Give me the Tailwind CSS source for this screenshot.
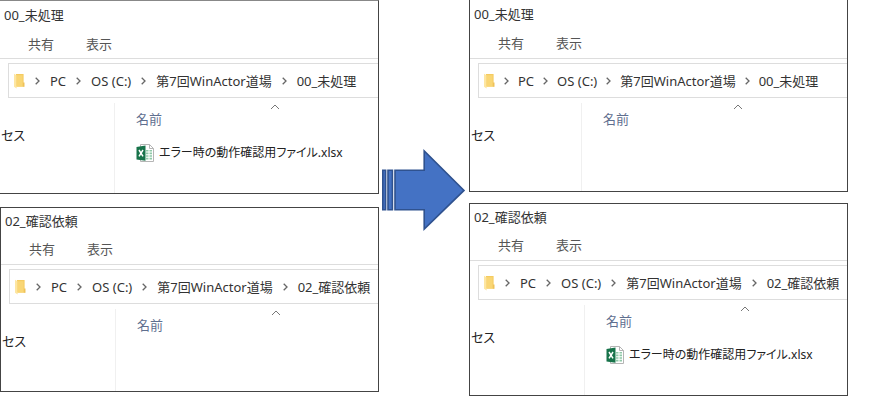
<!DOCTYPE html>
<html lang="ja">
<head>
  <meta charset="UTF-8">
  <title>第7回WinActor道場 - ファイルの移動</title>
  <meta name="viewport" content="width=device-width, initial-scale=1.0">
  <script src="https://cdn.jsdelivr.net/npm/@tailwindcss/browser@4"></script>
</head>
<body class="bg-white font-['Noto_Sans','Noto_Sans_CJK_JP',sans-serif] text-[13px] leading-[18px] text-[#333]">

  <!-- icons -->
  <svg class="hidden" aria-hidden="true">
    <symbol id="folder" viewBox="0 0 12 16">
      <path d="M3 1h7.6v12.6H3z" fill="#f5cb60"/>
      <path d="M9.6 9.5h1.9v4.3H9.6z" fill="#eec25a"/>
      <path d="M1 .8l2.6 1.4v13.2L1 13.8z" fill="#fde6a2"/>
      <path d="M3.6 2.2h6v11.4h-6z" fill="#f9d675"/>
    </symbol>
    <symbol id="chevron" viewBox="0 0 5 8">
      <path d="M.7.8L4 4 .7 7.2" fill="none" stroke="#666" stroke-width="1.3"/>
    </symbol>
    <symbol id="caret" viewBox="0 0 10 6">
      <path d="M1 5l4-4 4 4" fill="none" stroke="#777" stroke-width="1"/>
    </symbol>
    <symbol id="excel" viewBox="0 0 19 18">
      <path d="M4.5.5h9l4 4v13h-13z" fill="#fff" stroke="#b5b5b5"/>
      <path d="M13.5.5v4h4" fill="none" stroke="#b5b5b5"/>
      <path d="M10 6h2.5v1.6H10zM13.5 6H16v1.6h-2.5zM10 8.6h2.5v1.6H10zM13.5 8.6H16v1.6h-2.5zM10 11.2h2.5v1.6H10zM13.5 11.2H16v1.6h-2.5zM10 13.8h2.5v1.6H10zM13.5 13.8H16v1.6h-2.5z" fill="#8fc9a8"/>
      <path d="M.5 3l9-1.6v15.4L.5 15.4z" fill="#17734a"/>
      <path d="M3 6l4 6.4M7 6l-4 6.4" stroke="#fff" stroke-width="1.5"/>
    </symbol>
  </svg>

  <main class="grid grid-cols-[minmax(0,1fr)_90px_minmax(0,1fr)] pr-8">

    <!-- before -->
    <div class="flex flex-col gap-[13px]">
      <section class="flex min-h-[194px] flex-col overflow-hidden whitespace-nowrap border border-l-0 border-[#444] border-t-[#888]">
        <h2 class="flex h-7 items-center pl-1">00_未処理</h2>
        <div class="flex h-[30px] items-center gap-8 border-b border-[#ddd] pl-7 text-[#555]">
          <button type="button">共有</button>
          <button type="button">表示</button>
        </div>
        <nav class="mt-1 ml-2 flex h-[35px] items-center gap-[10px] border border-r-0 border-[#ddd] pl-1">
          <svg class="h-4 w-3 shrink-0"><use href="#folder"/></svg>
          <svg class="h-2 w-[5px] shrink-0"><use href="#chevron"/></svg>
          <a href="#">PC</a>
          <svg class="h-2 w-[5px] shrink-0"><use href="#chevron"/></svg>
          <a href="#">OS (C:)</a>
          <svg class="h-2 w-[5px] shrink-0"><use href="#chevron"/></svg>
          <a href="#">第7回WinActor道場</a>
          <svg class="h-2 w-[5px] shrink-0"><use href="#chevron"/></svg>
          <a href="#">00_未処理</a>
        </nav>
        <div class="mt-[5px] flex flex-1">
          <div class="w-[115px] border-r border-[#f0f0f0] pt-[23px] pl-px text-[#222]"><span class="[font-feature-settings:'palt']">セス</span></div>
          <table class="ml-[21px] self-start text-left">
            <thead>
              <tr>
                <th class="p-0 font-normal text-[#5f6f8f]">
                  <svg class="mt-px ml-[134px] h-[6px] w-[10px]"><use href="#caret"/></svg>
                  <button type="button" class="block">名前</button>
                </th>
              </tr>
            </thead>
            <tbody>
              <tr>
                <td class="p-0 pt-4">
                  <div class="flex items-center gap-1 text-[12px] text-[#222]">
                    <svg class="h-[18px] w-[19px]"><use href="#excel"/></svg>
                    <span class="[font-feature-settings:'palt']">エラー時の動作確認用ファイル.xlsx</span>
                  </div>
                </td>
              </tr>
            </tbody>
          </table>
        </div>
      </section>

      <section class="flex min-h-[185px] flex-col overflow-hidden whitespace-nowrap border border-[#444]">
        <h2 class="flex h-[26px] items-center pl-1">02_確認依頼</h2>
        <div class="flex h-[31px] items-center gap-8 border-b border-[#ddd] pl-7 text-[#555]">
          <button type="button">共有</button>
          <button type="button">表示</button>
        </div>
        <nav class="mt-1 ml-2 flex h-[35px] items-center gap-[10px] border border-r-0 border-[#ddd] pl-1">
          <svg class="h-4 w-3 shrink-0"><use href="#folder"/></svg>
          <svg class="h-2 w-[5px] shrink-0"><use href="#chevron"/></svg>
          <a href="#">PC</a>
          <svg class="h-2 w-[5px] shrink-0"><use href="#chevron"/></svg>
          <a href="#">OS (C:)</a>
          <svg class="h-2 w-[5px] shrink-0"><use href="#chevron"/></svg>
          <a href="#">第7回WinActor道場</a>
          <svg class="h-2 w-[5px] shrink-0"><use href="#chevron"/></svg>
          <a href="#">02_確認依頼</a>
        </nav>
        <div class="mt-[5px] flex flex-1">
          <div class="w-[115px] border-r border-[#f0f0f0] pt-[23px] pl-px text-[#222]"><span class="[font-feature-settings:'palt']">セス</span></div>
          <table class="ml-[21px] self-start text-left">
            <thead>
              <tr>
                <th class="p-0 font-normal text-[#5f6f8f]">
                  <svg class="mt-px ml-[134px] h-[6px] w-[10px]"><use href="#caret"/></svg>
                  <button type="button" class="block">名前</button>
                </th>
              </tr>
            </thead>
          </table>
        </div>
      </section>
    </div>

    <!-- striped arrow -->
    <svg class="mt-[148px] ml-[3px] h-[84px] w-[84px]" viewBox="0 0 84 84" role="img" aria-label="移動">
      <g fill="#4472c4" stroke="#2f528f" stroke-width="1.6">
        <path d="M.8 22.2h2.8v39.6H.8z"/>
        <path d="M6 22.2h4.4v39.6H6z"/>
        <path d="M13 22.2h29.2V3L82 42.4 42.2 81V61.8H13z"/>
      </g>
    </svg>

    <!-- after -->
    <div class="flex flex-col gap-[11px]">
      <section class="flex min-h-[192px] flex-col overflow-hidden whitespace-nowrap border border-t-0 border-[#444]">
        <h2 class="flex h-7 items-center pl-1">00_未処理</h2>
        <div class="flex h-[31px] items-center gap-8 border-b border-[#ddd] pl-7 text-[#555]">
          <button type="button">共有</button>
          <button type="button">表示</button>
        </div>
        <nav class="mt-1 ml-2 flex h-[35px] items-center gap-[9px] border border-r-0 border-[#ddd] pl-1">
          <svg class="h-4 w-3 shrink-0"><use href="#folder"/></svg>
          <svg class="h-2 w-[5px] shrink-0"><use href="#chevron"/></svg>
          <a href="#">PC</a>
          <svg class="h-2 w-[5px] shrink-0"><use href="#chevron"/></svg>
          <a href="#">OS (C:)</a>
          <svg class="h-2 w-[5px] shrink-0"><use href="#chevron"/></svg>
          <a href="#">第7回WinActor道場</a>
          <svg class="h-2 w-[5px] shrink-0"><use href="#chevron"/></svg>
          <a href="#">00_未処理</a>
        </nav>
        <div class="mt-[5px] flex flex-1">
          <div class="w-[112px] border-r border-[#f0f0f0] pt-[23px] pl-px text-[#222]"><span class="[font-feature-settings:'palt']">セス</span></div>
          <table class="ml-[21px] self-start text-left">
            <thead>
              <tr>
                <th class="p-0 font-normal text-[#5f6f8f]">
                  <svg class="mt-px ml-[130px] h-[6px] w-[10px]"><use href="#caret"/></svg>
                  <button type="button" class="block">名前</button>
                </th>
              </tr>
            </thead>
          </table>
        </div>
      </section>

      <section class="flex min-h-[193px] flex-col overflow-hidden whitespace-nowrap border border-[#444]">
        <h2 class="flex h-[26px] items-center pl-1">02_確認依頼</h2>
        <div class="flex h-[31px] items-center gap-8 border-b border-[#ddd] pl-7 text-[#555]">
          <button type="button">共有</button>
          <button type="button">表示</button>
        </div>
        <nav class="mt-1 ml-2 flex h-[35px] items-center gap-[10px] border border-r-0 border-[#ddd] pl-1">
          <svg class="h-4 w-3 shrink-0"><use href="#folder"/></svg>
          <svg class="h-2 w-[5px] shrink-0"><use href="#chevron"/></svg>
          <a href="#">PC</a>
          <svg class="h-2 w-[5px] shrink-0"><use href="#chevron"/></svg>
          <a href="#">OS (C:)</a>
          <svg class="h-2 w-[5px] shrink-0"><use href="#chevron"/></svg>
          <a href="#">第7回WinActor道場</a>
          <svg class="h-2 w-[5px] shrink-0"><use href="#chevron"/></svg>
          <a href="#">02_確認依頼</a>
        </nav>
        <div class="mt-[5px] flex flex-1">
          <div class="w-[115px] border-r border-[#f0f0f0] pt-[23px] pl-px text-[#222]"><span class="[font-feature-settings:'palt']">セス</span></div>
          <table class="ml-[21px] self-start text-left">
            <thead>
              <tr>
                <th class="p-0 font-normal text-[#5f6f8f]">
                  <svg class="mt-px ml-[134px] h-[6px] w-[10px]"><use href="#caret"/></svg>
                  <button type="button" class="block">名前</button>
                </th>
              </tr>
            </thead>
            <tbody>
              <tr>
                <td class="p-0 pt-4">
                  <div class="flex items-center gap-1 text-[12px] text-[#222]">
                    <svg class="h-[18px] w-[19px]"><use href="#excel"/></svg>
                    <span class="[font-feature-settings:'palt']">エラー時の動作確認用ファイル.xlsx</span>
                  </div>
                </td>
              </tr>
            </tbody>
          </table>
        </div>
      </section>
    </div>

  </main>

</body>
</html>
